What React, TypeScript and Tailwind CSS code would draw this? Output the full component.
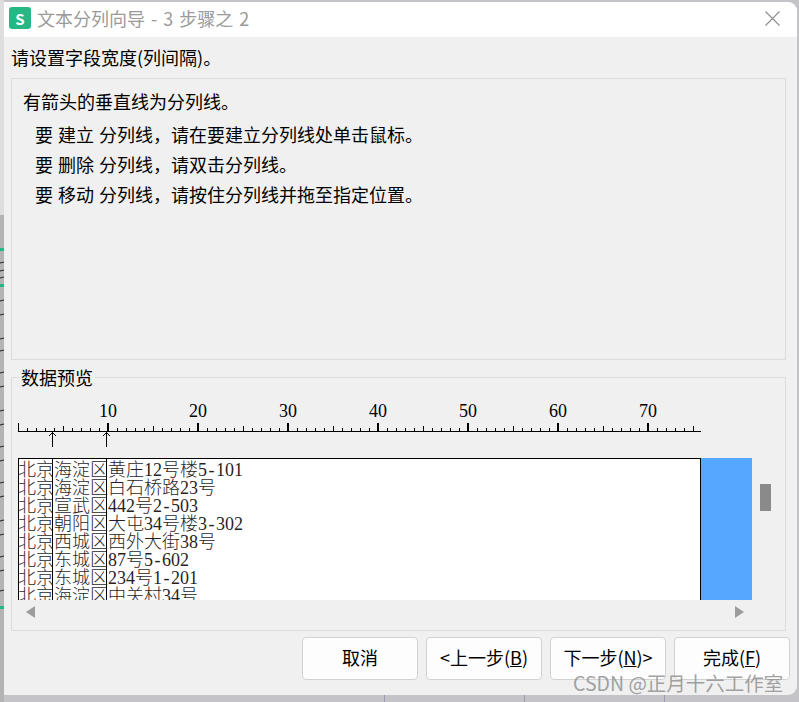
import React from 'react';

const uiFont = "font-['Noto_Sans_CJK_SC','Noto_Sans',sans-serif]";
const previewFont = "font-['Liberation_Serif','Noto_Sans_CJK_SC',serif]";

const col1 = ['北京', '北京', '北京', '北京', '北京', '北京', '北京', '北京'];
const col2 = ['海淀区', '海淀区', '宣武区', '朝阳区', '西城区', '东城区', '东城区', '海淀区'];
const col3 = ['黄庄12号楼5-101', '白石桥路23号', '442号2-503', '大屯34号楼3-302', '西外大街38号', '87号5-602', '234号1-201', '中关村34号'];

const hints = [
  '要 建立 分列线，请在要建立分列线处单击鼠标。',
  '要 删除 分列线，请双击分列线。',
  '要 移动 分列线，请按住分列线并拖至指定位置。',
];

const rulerLabels = [10, 20, 30, 40, 50, 60, 70];

// hyphen is full cell width in the fixed-pitch font of the reference
const PreviewText = ({ text }: { text: string }) => (
  <>
    {text.split('-').map((part, i) => (
      <React.Fragment key={i}>
        {i > 0 && <span className="inline-block w-[9px] text-center">-</span>}
        {part}
      </React.Fragment>
    ))}
  </>
);

const Ruler = () => {
  const ticks = Array.from({ length: 76 }, (_, i) => i);
  return (
    <svg width="690" height="32" viewBox="0 0 690 32" className="ml-[6px] mt-[-4px] block">
      <line x1="0" y1="14.5" x2="683" y2="14.5" stroke="#000" />
      {ticks.map((i) => {
        const x = i * 9 + 0.5;
        if (i === 0) return <line key={i} x1={x} y1="6" x2={x} y2="15" stroke="#000" />;
        if (i % 10 === 0) return <rect key={i} x={i * 9 - 1} y="6" width="2" height="9" fill="#000" />;
        if (i % 5 === 0) return <line key={i} x1={x} y1="9" x2={x} y2="15" stroke="#000" />;
        return <line key={i} x1={x} y1="11" x2={x} y2="15" stroke="#000" />;
      })}
      <path d="M34.5 15V30M31 19l3.5-3.5L38 19" fill="none" stroke="#000" />
      <path d="M88.5 15V30M85 19l3.5-3.5L92 19" fill="none" stroke="#000" />
    </svg>
  );
};

const Backdrop = () => (
  <svg width="4" height="702" viewBox="0 0 4 702" className="block shrink-0">
    <rect width="4" height="215" fill="#dedede" />
    <rect y="215" width="4" height="487" fill="#b4b4b4" />
    <rect y="248" width="4" height="3" fill="#25b884" />
    <rect y="284" width="4" height="3" fill="#25b884" />
    <rect y="606" width="4" height="3" fill="#25b884" />
    {[262, 270, 277, 300, 314, 338, 350, 372, 386, 410, 424, 446, 460, 482, 496, 520, 534, 556, 570, 590].map((y) => (
      <line key={y} x1="0" y1={y + 1} x2="4" y2={y} stroke="#222" />
    ))}
  </svg>
);

const WizardButton = ({ children }: { children: React.ReactNode }) => (
  <button className="h-[43px] w-[116px] rounded-[4px] border border-[#d2d2d2] bg-[#fdfdfd] pb-[3px] text-[18px] leading-none text-black">
    {children}
  </button>
);

export default function App() {
  return (
    <div className={`relative flex h-[702px] w-[799px] overflow-hidden bg-[#c4c4c8] ${uiFont}`}>
      <Backdrop />
      <div className="mt-[2px] h-[693px] w-[793px] shrink-0 overflow-hidden rounded-r-[9px] bg-[#f0f0f0]">
        <div className="flex h-[35px] items-center bg-white pb-[3px] pl-[5px] pr-[17px]">
          <div className="flex h-[22px] w-[22px] items-center justify-center rounded-[3px] bg-[#25b884] text-[15px] font-bold leading-none text-white">
            S
          </div>
          <span className="ml-[6px] whitespace-nowrap text-[18px] leading-none text-[#9a9a9a] [word-spacing:2px]">文本分列向导 - 3 步骤之 2</span>
          <svg width="15" height="15" viewBox="0 0 15 15" className="ml-auto">
            <path d="M0.5 0.5l14 14M14.5 0.5l-14 14" fill="none" stroke="#8f8f8f" strokeWidth="1.2" />
          </svg>
        </div>

        <div className="pl-[7px] pt-[9px]">
          <p className="h-[32px] text-[18px] leading-[22px] text-black">请设置字段宽度(列间隔)。</p>

          <div className="h-[282px] w-[775px] border border-[#dcdcdc] pl-[11px] pt-[11px] text-[18px] text-black">
            <p className="h-[33px] leading-[22px]">有箭头的垂直线为分列线。</p>
            {hints.map((line) => (
              <p key={line} className="ml-[12px] h-[30px] whitespace-nowrap leading-[22px] [word-spacing:1px]">
                {line}
              </p>
            ))}
          </div>

          <div className="relative mt-[17px] h-[254px] w-[775px] border border-[#dcdcdc]">
            <span className="absolute left-[7px] top-[-12px] bg-[#f0f0f0] px-[2px] text-[18px] leading-[22px] text-black">数据预览</span>

            <div className={`ml-[6px] mt-[23px] flex h-[20px] items-center text-[18px] leading-none text-black ${previewFont}`}>
              <div className="w-[45px] shrink-0" />
              {rulerLabels.map((n) => (
                <div key={n} className="w-[90px] shrink-0 text-center">
                  {n}
                </div>
              ))}
            </div>
            <Ruler />

            <div className="ml-[6px] mt-[9px] flex w-[774px]">
              <div className={`flex h-[142px] w-[683px] overflow-hidden border border-b-0 border-black bg-white text-[18px] font-light leading-[18px] text-[#2a1f1f] ${previewFont}`}>
                <div className="w-[34px] shrink-0 whitespace-nowrap border-r border-black pt-[2px]">
                  {col1.map((t, i) => (
                    <div key={i} className="ml-[-1px] h-[18px]">{t}</div>
                  ))}
                </div>
                <div className="w-[54px] shrink-0 whitespace-nowrap border-r border-black pt-[2px]">
                  {col2.map((t, i) => (
                    <div key={i} className="ml-[1px] h-[18px]">{t}</div>
                  ))}
                </div>
                <div className="flex-1 whitespace-nowrap pt-[2px]">
                  {col3.map((t, i) => (
                    <div key={i} className="ml-[1px] h-[18px]">
                      <PreviewText text={t} />
                    </div>
                  ))}
                </div>
              </div>
              <div className="h-[142px] w-[51px] shrink-0 bg-[#55a7ff]" />
              <div className="ml-[8px] mt-[26px] h-[27px] w-[11px] bg-[#8a8a8a]" />
            </div>

            <div className="ml-[14px] mt-[6px] flex w-[718px] items-center justify-between">
              <svg width="10" height="12" viewBox="0 0 10 12">
                <path d="M9 0v12L0 6z" fill="#9c9c9c" />
              </svg>
              <svg width="9" height="12" viewBox="0 0 9 12">
                <path d="M0 0v12l9-6z" fill="#9c9c9c" />
              </svg>
            </div>
          </div>

          <div className="mt-[6px] flex w-[779px] justify-end gap-[8px]">
            <WizardButton>取消</WizardButton>
            <WizardButton>
              &lt;上一步(<span className="underline">B</span>)
            </WizardButton>
            <WizardButton>
              下一步(<span className="underline">N</span>)&gt;
            </WizardButton>
            <WizardButton>
              完成(<span className="underline">F</span>)
            </WizardButton>
          </div>
        </div>
      </div>
      <svg width="799" height="7" viewBox="0 0 799 7" className="absolute left-0 top-[695px]">
        <path d="M384.5 0V7M524.5 0V7M664.5 0V7" stroke="#9a9ab8" />
      </svg>
      <span className="absolute left-[573px] top-[671px] whitespace-nowrap text-[19.5px] leading-[24px] text-[#8a8a8a]/80">CSDN @正月十六工作室</span>
    </div>
  );
}
